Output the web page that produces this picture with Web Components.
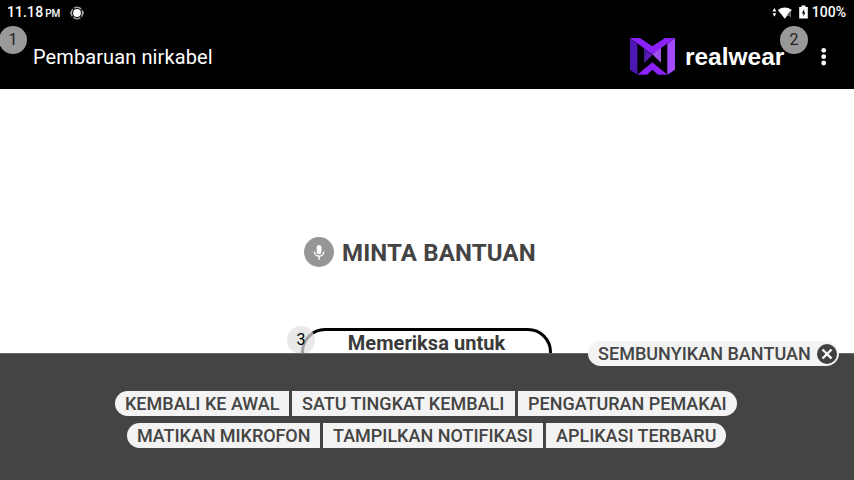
<!DOCTYPE html>
<html lang="id">
<head>
<meta charset="utf-8">
<title>Pembaruan nirkabel</title>
<style>
html,body{margin:0;width:854px;height:480px;overflow:hidden;background:#fff;font-family:Roboto,"Liberation Sans",sans-serif}
</style>
</head>
<body>
<device-screen></device-screen>
<script>
const define=(name,html)=>{
  const t=document.createElement('template');
  t.innerHTML=html;
  customElements.define(name,class extends HTMLElement{
    constructor(){super();this.attachShadow({mode:'open'}).append(t.content.cloneNode(true));}
  });
};

define('number-badge',`<style>
:host{display:flex;width:28px;height:28px;border-radius:50%;background:#999;color:#222;align-items:center;justify-content:center;font-size:16px;font-weight:400;line-height:28px;position:absolute}
</style><slot></slot>`);

define('status-bar',`<style>
:host{display:flex;height:25px;box-sizing:border-box;padding:0 8px 0 7px;align-items:center;color:#fff;background:#000;font-weight:500;font-size:14px;line-height:25px}
.t{letter-spacing:.1px}.pm{font-size:10px;margin-left:2px;padding-top:2px;letter-spacing:-.2px}
.c{margin-left:9px}.w{margin-left:auto}.b{margin-left:5px}.p{margin-left:4px}
svg{display:block;flex:none}
</style>
<span class="t">11.18</span><span class="pm">PM</span>
<svg class="c" width="16" height="16" viewBox="0 0 16 16"><circle cx="8" cy="8" r="5.7" fill="none" stroke="#999" stroke-width="1.6" stroke-dasharray="7.7 1.25" stroke-dashoffset="3.8"/><circle cx="8" cy="8" r="3.9" fill="#fff"/><path d="M.8 8l2-1.5v3zM15.2 8l-2-1.5v3z" fill="#bbb"/></svg>
<svg class="w" width="22" height="16" viewBox="0 0 22 16"><path d="M.5 6.6L2.4 3 4.3 6.6zM.5 8.2H4.3L2.4 11.8z" fill="#fff"/><path d="M5.8 5Q12.8 .2 19.8 5L12.8 13.8z" fill="#fff"/><path d="M18.6 6L15.6 10.2H19M18.4 7v5.4" stroke="#777" stroke-width="1.1" fill="none"/></svg>
<svg class="b" width="9" height="16" viewBox="0 0 9 16"><path d="M.2 2H2.5V.4h4V2h2.3v11.4H.2z" fill="#fff"/><path d="M5.2 4L2.8 8.4h1.6v3L6.4 7.4H5.2z" fill="#000"/></svg>
<span class="p">100%</span>`);

define('realwear-logo',`<style>
:host{display:flex;align-items:flex-start;width:154px;color:#fff}
svg{display:block;flex:none}
span{font:bold 24.5px/28px "Liberation Sans",Arial,sans-serif;letter-spacing:-.02px;margin:5px 0 0 10px}
</style>
<svg width="45" height="37" viewBox="15 15 135 111">
<path d="M15 15L37 32V125L15 110z" fill="#4d16b5"/>
<path d="M150 15L127 32V125L150 110z" fill="#a349ff"/>
<path d="M57 41L82 66L57 89z" fill="#42189a"/>
<path d="M108 41L82 64L108 89z" fill="#a050f0"/>
<path d="M82 66L57 89L66 58z" fill="#5c1cb8"/>
<path d="M15 15H45L82 40L120 15H150L82 64z" fill="#8b22fb"/>
<path d="M37 125L82 88L127 125H99L82 110L66 125z" fill="#8b22fb"/>
</svg><span>realwear</span>`);

define('app-header',`<style>
:host{display:flex;position:relative;height:64px;box-sizing:border-box;padding:13px 27px 0 33px;background:#000;color:#fff}
h1{margin:7px auto 0 0;font-size:20px;line-height:24px;font-weight:400;letter-spacing:.1px}
realwear-logo{margin-right:37px}
.m{display:block;margin-top:9px}
.one{left:-1px;top:1px}.two{left:780px;top:1px}
</style>
<h1>Pembaruan nirkabel</h1><realwear-logo></realwear-logo>
<svg class="m" width="6" height="20" viewBox="0 0 6 20"><g fill="#fff"><circle cx="2.7" cy="3.3" r="2.4"/><circle cx="2.7" cy="9.7" r="2.4"/><circle cx="2.7" cy="16" r="2.4"/></g></svg>
<number-badge class="one">1</number-badge><number-badge class="two">2</number-badge>`);

define('voice-help',`<style>
:host{display:flex;align-items:center;gap:8px;height:30px;color:#444;font-weight:700;font-size:24px;line-height:30px;letter-spacing:.15px;white-space:nowrap}
svg{display:block;flex:none}.x{padding-top:2px}
</style>
<svg width="30" height="30" viewBox="0 0 30 30"><circle cx="15" cy="15" r="15" fill="#969696"/><rect x="12.7" y="8" width="4.8" height="9.3" rx="2.4" fill="#fff"/><path d="M10.4 14.5a4.7 4.7 0 0 0 9.4 0M15.1 19.2v3.6" fill="none" stroke="#fff" stroke-width="1.4"/></svg>
<span class="x"><slot></slot></span>`);

define('check-button',`<style>
:host{display:block;position:relative;width:251px;height:60px;box-sizing:border-box;border:3px solid #000;border-radius:24px;color:#3a3a3a;text-align:center;font-weight:700;font-size:20px;line-height:24px;letter-spacing:.05px}
number-badge{left:-17px;top:-5px;background:rgba(225,225,225,.72);color:#000}
</style><slot></slot><number-badge>3</number-badge>`);

define('command-chip',`<style>
:host{display:flex;height:25px;box-sizing:border-box;background:#f3f3f3;color:#444;font-weight:500;font-size:18px;line-height:26px;align-items:center;justify-content:flex-start;padding-left:10px;white-space:nowrap}
:host([edge=left]){border-radius:12.5px 0 0 12.5px}
:host([edge=right]){border-radius:0 12.5px 12.5px 0}
:host([edge=both]){border-radius:12.5px}
</style><slot></slot>`);

define('help-panel',`<style>
:host{display:flex;position:relative;flex-direction:column;height:127px;background:#444;box-sizing:border-box;border-top:1px solid #6a6a6a;padding-top:37px;gap:7px}
.r{display:flex;gap:3px}.a{padding-left:115px}.b{padding-left:127px}
.hide{position:absolute;left:588px;top:-13px;width:251px;letter-spacing:.03px}
svg{display:block;margin-left:6px}
</style>
<div class="r a"><command-chip edge="left" style="width:174px">KEMBALI KE AWAL</command-chip><command-chip style="width:223px">SATU TINGKAT KEMBALI</command-chip><command-chip edge="right" style="width:219px">PENGATURAN PEMAKAI</command-chip></div>
<div class="r b"><command-chip edge="left" style="width:193px;letter-spacing:-.06px">MATIKAN MIKROFON</command-chip><command-chip style="width:220px">TAMPILKAN NOTIFIKASI</command-chip><command-chip edge="right" style="width:180px">APLIKASI TERBARU</command-chip></div>
<command-chip class="hide" edge="both">SEMBUNYIKAN BANTUAN<svg width="20" height="20" viewBox="0 0 20 20"><circle cx="10" cy="10" r="10" fill="#404040"/><path d="M5.5 5.5l9 9M14.5 5.5l-9 9" stroke="#fff" stroke-width="2.4"/></svg></command-chip>`);

define('device-screen',`<style>
:host{display:flex;flex-direction:column;width:854px;height:480px;background:#fff;overflow:hidden}
main{height:264px;display:flex;flex-direction:column}
voice-help{margin:148px 0 0 304px}
check-button{margin:61px 0 0 301px;flex:none}
</style>
<status-bar></status-bar><app-header></app-header>
<main><voice-help>MINTA BANTUAN</voice-help><check-button>Memeriksa untuk</check-button></main>
<help-panel></help-panel>`);
</script>
</body>
</html>
